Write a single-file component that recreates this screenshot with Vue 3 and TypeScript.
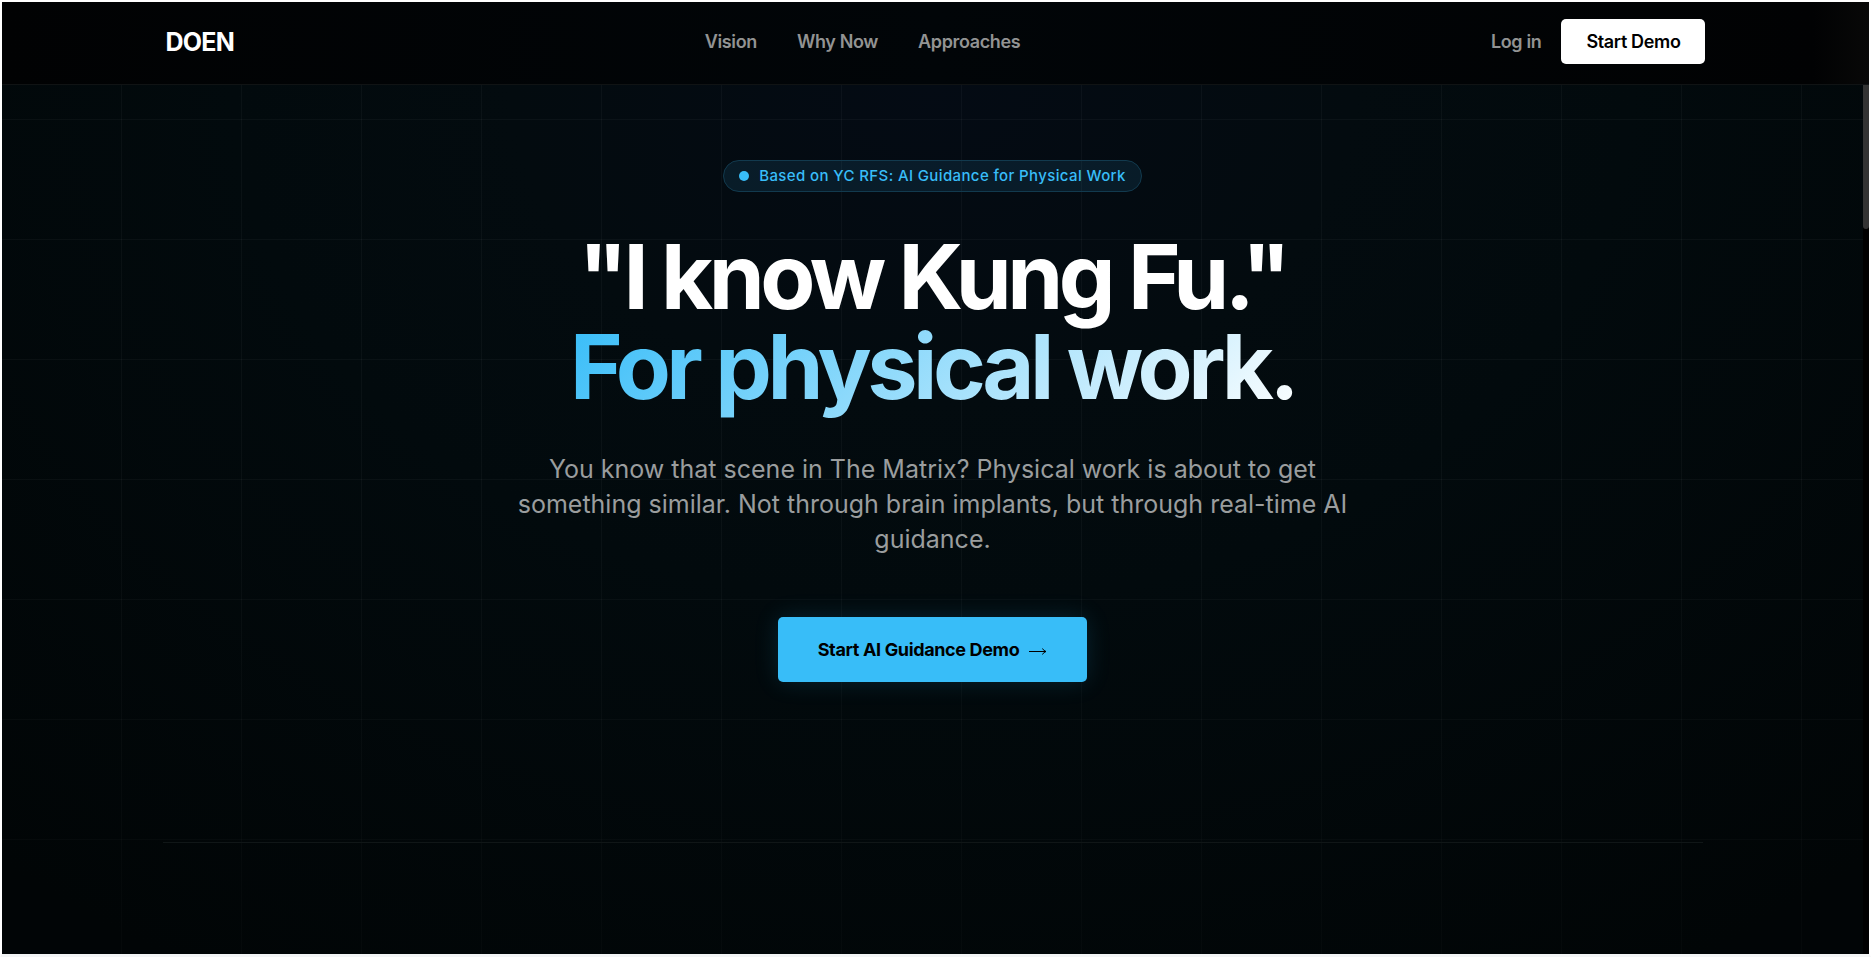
<script setup lang="ts">
interface NavLink {
  label: string
  href: string
}

const links: NavLink[] = [
  { label: 'Vision', href: '#vision' },
  { label: 'Why Now', href: '#why-now' },
  { label: 'Approaches', href: '#approaches' },
]
</script>

<template>
  <div class="page">
    <header class="header">
      <div class="header-inner">
        <a class="logo" href="#top">DOEN</a>
        <nav class="nav" aria-label="Main">
          <a v-for="link in links" :key="link.href" class="nav-link" :href="link.href">{{ link.label }}</a>
        </nav>
        <div class="actions">
          <a class="nav-link" href="#login">Log in</a>
          <button class="demo-button" type="button">Start Demo</button>
        </div>
      </div>
    </header>

    <div class="viewport">
      <main id="top" class="content">
        <div class="grid" aria-hidden="true"></div>
        <section class="hero">
          <p class="badge"><span class="dot"></span>Based on YC RFS: AI Guidance for Physical Work</p>
          <h1 class="title">
            <span class="line">"I know Kung Fu."</span>
            <span class="line gradient">For physical work.</span>
          </h1>
          <p class="lead">
            You know that scene in The Matrix? Physical work is about to get something similar. Not through brain
            implants, but through real-time AI guidance.
          </p>
          <button class="cta" type="button">
            Start AI Guidance Demo
            <svg class="arrow" viewBox="0 0 18 10" aria-hidden="true">
              <path d="M0 6.5H17M13.5 3.5Q14.5 5.8 17 6.5Q14.5 7.2 13.5 9.5" />
            </svg>
          </button>
        </section>
        <hr class="divider" />
      </main>
      <div class="track" aria-hidden="true"><div class="thumb"></div></div>
    </div>
  </div>
</template>

<style>
body {
  margin: 0;
  background: #fff;
}
</style>

<style scoped>
.page {
  box-sizing: border-box;
  display: flex;
  flex-direction: column;
  min-height: 100vh;
  border: 2px solid #fff;
  border-bottom: 3px solid #f3f5f6;
  background: #000;
  color: #fff;
  font-family: Inter, "Liberation Sans", sans-serif;
}

.header {
  border-bottom: 1px solid #101314;
  background: linear-gradient(90deg, #010203, #010508 50%, #010203 97%, #080808);
}

.header-inner {
  display: flex;
  align-items: center;
  justify-content: space-between;
  max-width: 1540px;
  margin: 0 auto;
  padding: 17px 0 20px;
}

.logo {
  color: #fff;
  font-size: 25px;
  font-weight: 700;
  line-height: 30px;
  letter-spacing: -0.03em;
  text-decoration: none;
}

.nav {
  display: flex;
  gap: 40px;
}

.nav-link {
  color: #929393;
  font-size: 18px;
  font-weight: 600;
  line-height: 24px;
  letter-spacing: -0.02em;
  text-decoration: none;
}

.actions {
  display: flex;
  align-items: center;
  gap: 20px;
}

.demo-button {
  height: 45px;
  padding: 0 25px;
  border: 0;
  border-radius: 5px;
  background: #fff;
  color: #000;
  font: 600 18px/24px Inter, "Liberation Sans", sans-serif;
  letter-spacing: -0.02em;
}

.viewport {
  display: flex;
  flex: 1;
}

.content {
  position: relative;
  flex: 1;
  background: radial-gradient(ellipse 75% 120% at 50% 0, #040b14, #030b0f 30%, #020a0d 50%, #010506);
}

.grid {
  position: absolute;
  inset: 0;
  background-image:
    linear-gradient(90deg, transparent 119px, rgba(255, 255, 255, 0.035) 119px),
    linear-gradient(transparent 119px, rgba(255, 255, 255, 0.035) 119px);
  background-position: 0 0, 0 -85px;
  background-size: 120px 120px;
  mask-image: linear-gradient(#000 50%, rgba(0, 0, 0, 0.5));
}

.hero {
  position: relative;
  display: flex;
  flex-direction: column;
  align-items: center;
  box-sizing: border-box;
  min-height: 757px;
  padding: 75px 24px;
  text-align: center;
}

.badge {
  display: flex;
  align-items: center;
  gap: 10px;
  box-sizing: border-box;
  height: 32px;
  margin: 0 0 40px;
  padding: 0 15px;
  border: 1px solid #123a4e;
  border-radius: 16px;
  background: rgba(56, 189, 248, 0.1);
  color: #38bdf8;
  font-size: 15px;
  font-weight: 500;
  line-height: 20px;
  letter-spacing: 0.025em;
}

.dot {
  width: 10px;
  height: 10px;
  border-radius: 50%;
  background: #38bdf8;
}

.title {
  margin: 0 0 24px;
  font-size: 90px;
  font-weight: 700;
  line-height: 90px;
  letter-spacing: -0.05em;
}

.line {
  display: block;
}

.gradient {
  width: fit-content;
  margin: 0 auto;
  padding-bottom: 16px;
  background: linear-gradient(135deg, #38bdf8, #fff);
  background-clip: text;
  color: transparent;
}

.lead {
  max-width: 864px;
  margin: 0 0 60px;
  color: #9a9d9e;
  font-size: 25px;
  font-weight: 400;
  line-height: 35px;
}

.cta {
  display: flex;
  align-items: center;
  gap: 10px;
  height: 65px;
  padding: 0 40px;
  border: 0;
  border-radius: 5px;
  background: #38bdf8;
  box-shadow: 0 0 24px rgba(56, 189, 248, 0.15);
  color: #000;
  font: 700 18px/24px Inter, "Liberation Sans", sans-serif;
  letter-spacing: -0.02em;
}

.arrow {
  width: 18px;
  height: 10px;
  fill: none;
  stroke: #000;
  stroke-width: 1;
}

.divider {
  position: relative;
  max-width: 1540px;
  height: 1px;
  margin: 0 auto;
  border: 0;
  background: #101617;
}

.track {
  width: 6px;
  background: #000;
}

.thumb {
  height: 144px;
  border-radius: 0 0 3px 3px;
  background: #333;
}
</style>
